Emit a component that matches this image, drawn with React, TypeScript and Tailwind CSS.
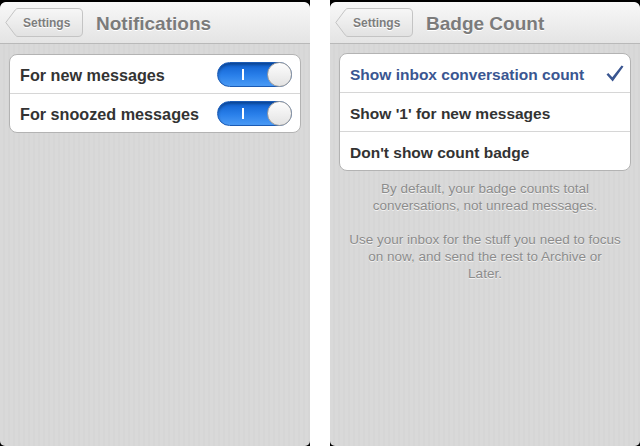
import React from "react";

const font = "font-['Liberation_Sans',Arial,sans-serif]";

function BackButton() {
  return (
    <div className="relative h-[29px] w-[78px] shrink-0">
      <svg className="absolute inset-0" width="78" height="29" viewBox="0 0 78 29">
        <defs>
          <linearGradient id="bb" x1="0" y1="0" x2="0" y2="1">
            <stop offset="0" stopColor="#f7f7f7" />
            <stop offset="1" stopColor="#e2e2e2" />
          </linearGradient>
        </defs>
        <path
          d="M0.8,14.5 L10.2,2 Q11.3,0.5 13,0.5 L73,0.5 Q77.5,0.5 77.5,5 L77.5,24 Q77.5,28.5 73,28.5 L13,28.5 Q11.3,28.5 10.2,27 Z"
          fill="url(#bb)"
          stroke="#c4c4c4"
        />
      </svg>
      <span className="relative flex h-full items-center pl-[18px] pt-[1px] text-[12px] font-bold text-[#7d7d7d] [text-shadow:0_1px_0_#fff]">
        Settings
      </span>
    </div>
  );
}

function NavBar({ title }: { title: string }) {
  return (
    <div className="flex h-[42px] shrink-0 items-center gap-[13px] rounded-t-[6px] border-b border-[#b9b9b9] bg-[linear-gradient(#f8f8f8,#e4e4e4)] px-[5px]">
      <BackButton />
      <span className="pt-[4px] text-[19px] font-bold text-[#7b7b7b] [text-shadow:0_1px_0_#fff]">{title}</span>
    </div>
  );
}

function Toggle() {
  return (
    <div className="relative h-[25px] w-[75px] rounded-full border border-[#1b5bb5] bg-[linear-gradient(#0e5fcf,#2a80ea_55%,#4a9af5)] shadow-[inset_0_2px_3px_rgba(0,0,0,0.3)]">
      <div className="absolute left-[24px] top-[6px] h-[11px] w-[2px] bg-white" />
      <div className="absolute -right-px -top-px h-[25px] w-[25px] rounded-full border border-[#9c9c9c] bg-[linear-gradient(#fdfdfd,#e3e3e3)]" />
    </div>
  );
}

function Check() {
  return (
    <svg width="18" height="17" viewBox="0 0 18 17">
      <path d="M0.5,9.5 L2.3,8 L6.3,12.3 L15.6,0.5 L17.5,1.6 L6.7,16.4 Z" fill="#3a5691" />
    </svg>
  );
}

function Panel({ children }: { children: React.ReactNode }) {
  return (
    <div className="flex h-[446px] w-[310px] shrink-0 flex-col bg-black pt-[2px]">
      <div className="flex flex-1 flex-col overflow-hidden rounded-[6px] rounded-b-[5px] bg-[#d8d8d8] bg-[repeating-linear-gradient(90deg,#d9d9d9_0px,#d9d9d9_3px,#d6d6d6_3px,#d6d6d6_5px)]">
        {children}
      </div>
    </div>
  );
}

const notifRows = ["For new messages", "For snoozed messages"];
const badgeRows = ["Show inbox conversation count", "Show '1' for new messages", "Don't show count badge"];

export default function App() {
  return (
    <div className={`flex h-[446px] w-[640px] justify-between bg-white ${font}`}>
      <Panel>
        <NavBar title="Notifications" />
        <div className="mx-[9px] mt-[10px] overflow-hidden rounded-[8px] border border-[#b3b3b3] bg-white">
          {notifRows.map((r, i) => (
            <div
              key={r}
              className={`flex h-[38px] items-center justify-between pl-[10px] pr-[8px] ${i > 0 ? "border-t border-[#d6d6d6] h-[39px]" : ""}`}
            >
              <span className="pt-[3px] text-[16.2px] font-bold text-[#333333]">{r}</span>
              <Toggle />
            </div>
          ))}
        </div>
      </Panel>
      <Panel>
        <NavBar title="Badge Count" />
        <div className="mx-[9px] mt-[9px] overflow-hidden rounded-[8px] border border-[#b3b3b3] bg-white">
          {badgeRows.map((r, i) => (
            <div
              key={r}
              className={`flex h-[38px] items-center justify-between pl-[10px] pr-[6px] ${i > 0 ? "border-t border-[#d6d6d6] h-[39px]" : ""}`}
            >
              <span className={`pt-[3px] text-[15.5px] font-bold ${i === 0 ? "text-[#3a5691]" : "text-[#333333]"}`}>{r}</span>
              {i === 0 && <Check />}
            </div>
          ))}
        </div>
        <div className="mt-[9px] text-center text-[13.5px] leading-[17px] text-[#8c8c8c] [text-shadow:0_1px_0_#f2f2f2]">
          <p>
            By default, your badge counts total
            <br />
            conversations, not unread messages.
          </p>
          <p className="mt-[17px]">
            Use your inbox for the stuff you need to focus
            <br />
            on now, and send the rest to Archive or
            <br />
            Later.
          </p>
        </div>
      </Panel>
    </div>
  );
}
